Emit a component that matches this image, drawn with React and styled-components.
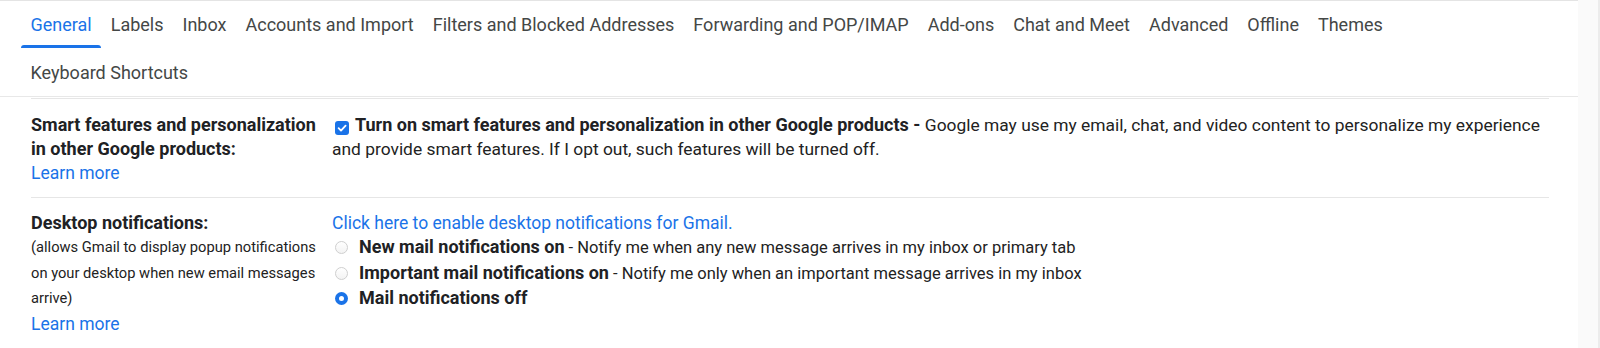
import styled, { createGlobalStyle, css } from 'styled-components';

const GlobalStyle = createGlobalStyle`
  html, body {
    margin: 0;
    padding: 0;
    background: #fff;
  }
  body {
    font-family: Roboto, "Liberation Sans", Arial, sans-serif;
    color: #202124;
    -webkit-font-smoothing: antialiased;
  }
`;

const Page = styled.div`
  display: flex;
  width: 1600px;
  height: 348px;
  overflow: hidden;
`;

const Panel = styled.div`
  flex: 0 0 1578px;
  box-shadow: inset 0 1px 0 #e4e4e4;
`;

const SideStrip = styled.div`
  flex: 1;
  background: #fafafa;
  border-right: 2px solid #ececec;
`;

const TabBar = styled.nav`
  height: 96px;
  padding-left: 21px;
  border-bottom: 1px solid #e8e8e8;
`;

const TabList = styled.div`
  display: flex;
  flex-wrap: wrap;
  width: 1440px;
`;

const Tab = styled.a`
  position: relative;
  display: flex;
  align-items: center;
  height: 48px;
  box-sizing: border-box;
  padding: 1px 9.5px 0;
  font-size: 18px;
  color: #444746;
  cursor: pointer;
  white-space: nowrap;

  ${({ $active }) =>
    $active &&
    css`
      color: #1a73e8;
      &::after {
        content: '';
        position: absolute;
        left: 0;
        right: 0;
        bottom: 0;
        height: 3px;
        background: #1a73e8;
        border-radius: 3px 3px 0 0;
      }
    `}
`;

const Rows = styled.div`
  margin: 1px 0 0 31px;
  width: 1518px;
`;

const Row = styled.div`
  display: grid;
  grid-template-columns: 301px 1fr;
  border-top: 1px solid #e6e6e6;
  padding: ${({ $pad }) => $pad};
`;

const LabelCell = styled.div`
  display: flex;
  flex-direction: column;
  padding-right: 12px;
`;

const LabelTitle = styled.div`
  font-size: 18px;
  font-weight: 700;
  line-height: 24px;
  color: #202124;
`;

const LabelNote = styled.div`
  font-size: 14.7px;
  line-height: 25.5px;
  color: #222;
`;

const Link = styled.a`
  font-size: 17.5px;
  line-height: 24px;
  color: #1a73e8;
  cursor: pointer;
`;

const ValueCell = styled.div`
  display: flex;
  flex-direction: column;
`;

const Paragraph = styled.div`
  font-size: 17.4px;
  line-height: 24px;
  color: #222;
`;

const Strong = styled.b`
  font-size: 18px;
  font-weight: 700;
  color: #202124;
`;

const CheckBox = styled.span`
  display: inline-flex;
  align-items: center;
  justify-content: center;
  width: 14px;
  height: 14px;
  margin: 0 6px 0 3px;
  vertical-align: -2px;
  border-radius: 3px;
  background: #1a73e8;
`;

const RadioRow = styled.label`
  display: flex;
  align-items: center;
  gap: 11px;
  padding-left: 3px;
  font-size: 16.5px;
  line-height: 24.5px;
  color: #222;
`;

const Radio = styled.span`
  flex: 0 0 auto;
  box-sizing: border-box;
  width: 13px;
  height: 13px;
  border-radius: 50%;
  ${({ $checked }) =>
    $checked
      ? css`
          background: #fff;
          box-shadow: inset 0 0 0 4px #1a73e8;
        `
      : css`
          border: 1px solid #cfcfcf;
          background: linear-gradient(#fff, #f3f3f3);
        `}
`;

const tabs = [
  'General',
  'Labels',
  'Inbox',
  'Accounts and Import',
  'Filters and Blocked Addresses',
  'Forwarding and POP/IMAP',
  'Add-ons',
  'Chat and Meet',
  'Advanced',
  'Offline',
  'Themes',
  'Keyboard Shortcuts',
];

const notifications = [
  {
    title: 'New mail notifications on',
    text: 'Notify me when any new message arrives in my inbox or primary tab',
  },
  {
    title: 'Important mail notifications on',
    text: 'Notify me only when an important message arrives in my inbox',
  },
  { title: 'Mail notifications off', checked: true },
];

const Check = () => (
  <svg width="10" height="10" viewBox="0 0 10 10">
    <path d="M1.6 5.2 L4 7.6 L8.6 2.6" fill="none" stroke="#fff" strokeWidth="1.8" strokeLinecap="round" strokeLinejoin="round" />
  </svg>
);

const App = () => (
  <Page>
    <GlobalStyle />
    <Panel>
      <TabBar>
        <TabList>
          {tabs.map((tab, i) => (
            <Tab key={tab} $active={i === 0}>
              {tab}
            </Tab>
          ))}
        </TabList>
      </TabBar>
      <Rows>
        <Row $pad="14px 0 12px">
          <LabelCell>
            <LabelTitle>Smart features and personalization in other Google products:</LabelTitle>
            <Link>Learn more</Link>
          </LabelCell>
          <ValueCell>
            <Paragraph>
              <CheckBox>
                <Check />
              </CheckBox>
              <Strong>Turn on smart features and personalization in other Google products - </Strong>
              Google may use my email, chat, and video content to personalize my experience and provide
              smart features. If I opt out, such features will be turned off.
            </Paragraph>
          </ValueCell>
        </Row>
        <Row $pad="13px 0 12px">
          <LabelCell>
            <LabelTitle>Desktop notifications:</LabelTitle>
            <LabelNote>
              (allows Gmail to display popup notifications on your desktop when new email messages
              arrive)
            </LabelNote>
            <Link>Learn more</Link>
          </LabelCell>
          <ValueCell>
            <Link>Click here to enable desktop notifications for Gmail.</Link>
            {notifications.map((n) => (
              <RadioRow key={n.title}>
                <Radio $checked={n.checked} />
                <span>
                  <Strong>{n.title}</Strong>
                  {n.text && ` - ${n.text}`}
                </span>
              </RadioRow>
            ))}
          </ValueCell>
        </Row>
      </Rows>
    </Panel>
    <SideStrip />
  </Page>
);

export default App;
